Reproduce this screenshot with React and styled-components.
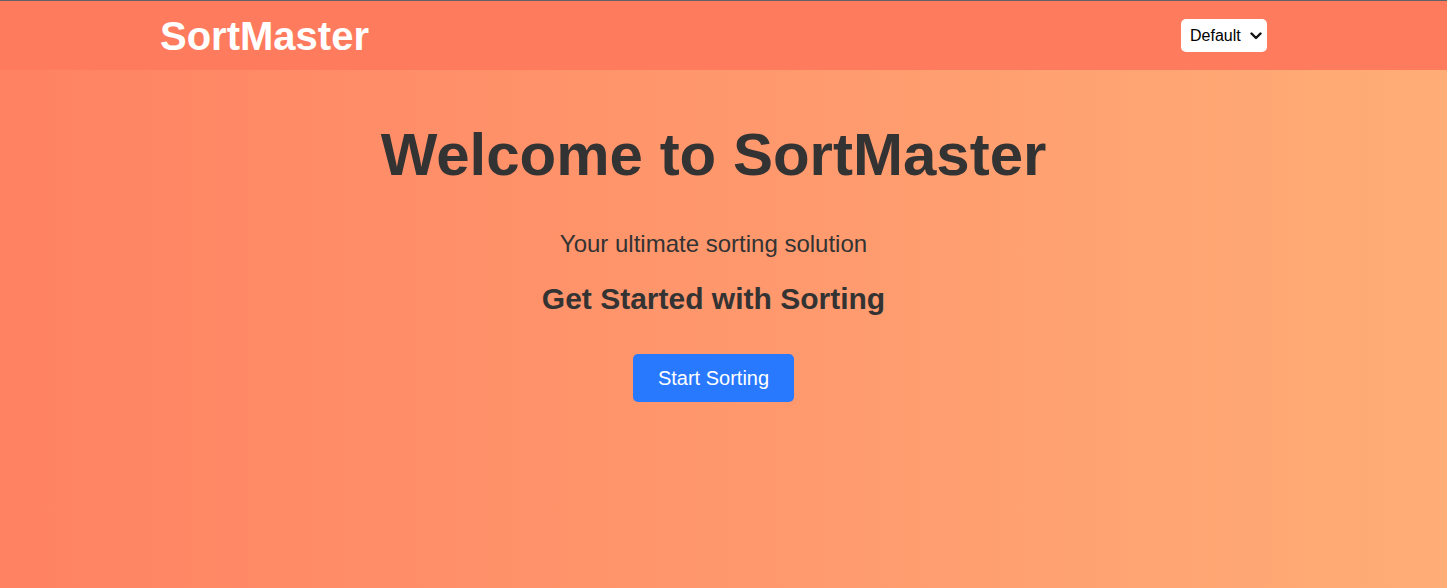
import React from "react";
import styled, { createGlobalStyle } from "styled-components";

const Global = createGlobalStyle`
  html, body { margin: 0; padding: 0; height: 100%; }
  body {
    font-family: "Liberation Sans", Arial, sans-serif;
    background: linear-gradient(to right, #ff8262, #ffad77);
    min-height: 588px;
  }
  #root { min-height: 588px; }
`;

const Page = styled.div`
  min-height: 588px;
  display: flex;
  flex-direction: column;
`;

const Header = styled.header`
  background: #ff7b5e;
  border-top: 1px solid #5f6368;
  height: 69px;
  display: flex;
  align-items: center;
  justify-content: space-between;
  padding: 0 180px 0 160px;
`;

const Logo = styled.h1`
  margin: 0;
  color: #ffffff;
  font-size: 40px;
  font-weight: 700;
  line-height: 46px;
`;

const SelectWrap = styled.div`
  position: relative;
  display: flex;
`;

const ThemeSelect = styled.select`
  appearance: none;
  -webkit-appearance: none;
  height: 33px;
  width: 86px;
  border: none;
  border-radius: 5px;
  background: #ffffff;
  color: #000;
  font-family: "Liberation Sans", Arial, sans-serif;
  font-size: 16px;
  padding: 0 0 0 9px;
  outline: none;
`;

const Chevron = styled.svg`
  position: absolute;
  right: 5px;
  top: 13px;
  pointer-events: none;
`;

const Main = styled.main`
  display: flex;
  flex-direction: column;
  align-items: center;
  padding: 51px 20px 0 0;
  color: #333333;
  text-align: center;
`;

const Title = styled.h2`
  margin: 0 0 42px;
  font-size: 60px;
  font-weight: 700;
  line-height: 67px;
`;

const Tagline = styled.p`
  margin: 0 0 26px;
  font-size: 24px;
  line-height: 27px;
`;

const SubTitle = styled.h3`
  margin: 0 0 39px;
  font-size: 30px;
  font-weight: 700;
  line-height: 32px;
`;

const PrimaryButton = styled.button`
  background: #2979ff;
  color: #ffffff;
  border: none;
  border-radius: 5px;
  font-family: "Liberation Sans", Arial, sans-serif;
  font-size: 20px;
  line-height: 22px;
  padding: 13px 25px;
  cursor: pointer;
`;

export default function App() {
  return (
    <>
      <Global />
      <Page>
        <Header>
          <Logo>SortMaster</Logo>
          <SelectWrap>
            <ThemeSelect defaultValue="default">
              <option value="default">Default</option>
              <option value="dark">Dark</option>
              <option value="light">Light</option>
            </ThemeSelect>
            <Chevron width="12" height="8" viewBox="0 0 12 8">
              <polyline
                points="1.5,1.5 6,6 10.5,1.5"
                fill="none"
                stroke="#111"
                strokeWidth="2.4"
                strokeLinecap="round"
                strokeLinejoin="round"
              />
            </Chevron>
          </SelectWrap>
        </Header>
        <Main>
          <Title>Welcome to SortMaster</Title>
          <Tagline>Your ultimate sorting solution</Tagline>
          <SubTitle>Get Started with Sorting</SubTitle>
          <PrimaryButton>Start Sorting</PrimaryButton>
        </Main>
      </Page>
    </>
  );
}
